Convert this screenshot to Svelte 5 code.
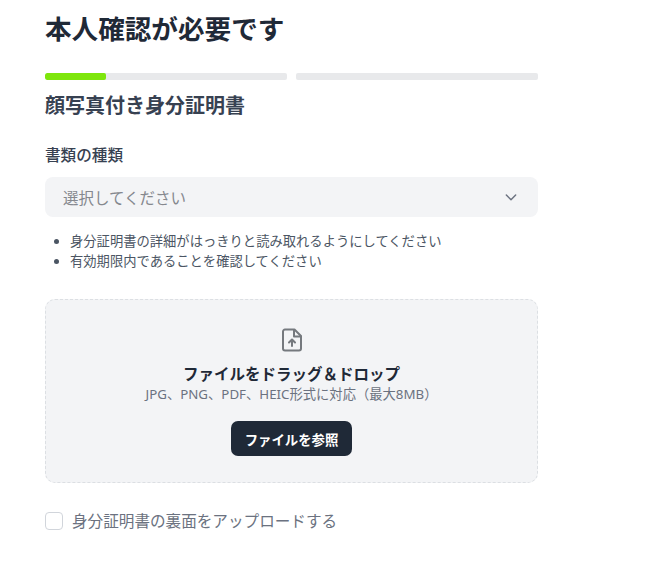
<script>
  const TIPS = [
    '身分証明書の詳細がはっきりと読み取れるようにしてください',
    '有効期限内であることを確認してください',
  ];
</script>

<main class="page">
  <h1 class="title">本人確認が必要です</h1>

  <div class="progress">
    <div class="track"><div class="fill"></div></div>
    <div class="track"></div>
  </div>

  <h2 class="subtitle">顔写真付き身分証明書</h2>

  <div class="label">書類の種類</div>
  <div class="select">
    <span>選択してください</span>
    <svg width="16" height="16" viewBox="0 0 24 24" fill="none" stroke="#6b7280" stroke-width="2.2" stroke-linecap="round" stroke-linejoin="round" aria-hidden="true">
      <path d="M5 9l7 7 7-7" />
    </svg>
  </div>

  <ul class="tips">
    {#each TIPS as tip}
      <li>{tip}</li>
    {/each}
  </ul>

  <section class="drop">
    <svg class="file-icon" width="24" height="24" viewBox="0 0 24 24" fill="none" stroke="#75797e" stroke-width="2" stroke-linecap="round" stroke-linejoin="round" aria-hidden="true">
      <path d="M5 1.5h9.5L21 8v12.5a2 2 0 0 1-2 2H5a2 2 0 0 1-2-2v-17a2 2 0 0 1 2-2z" />
      <path d="M14 2v6.5h6.5" />
      <path d="M12 18v-6M9 14.5l3-3 3 3" />
    </svg>
    <div class="drop-title">ファイルをドラッグ＆ドロップ</div>
    <div class="drop-sub">JPG、PNG、PDF、HEIC形式に対応（最大8MB）</div>
    <button class="browse" type="button">ファイルを参照</button>
  </section>

  <label class="back">
    <span class="box"></span>
    <span>身分証明書の裏面をアップロードする</span>
  </label>
</main>

<style>
  :global(body) {
    background: #fff;
    font-family: "Noto Sans", "Noto Sans CJK JP", sans-serif;
    color: #1f2937;
  }

  .page {
    width: 493px;
    padding: 11px 0 0 45px;
  }

  .title {
    margin: 0;
    font-size: 26.6px;
    line-height: 36px;
    font-weight: 700;
    color: #1f2937;
  }

  .progress {
    display: flex;
    gap: 9px;
    margin-top: 26px;
  }
  .track {
    flex: 1;
    height: 7px;
    border-radius: 2px;
    background: #e8e9eb;
    overflow: hidden;
  }
  .fill {
    width: 25%;
    height: 100%;
    border-radius: 2px;
    background: #7ee60c;
  }

  .subtitle {
    margin: 12px 0 0;
    font-size: 20px;
    line-height: 27px;
    font-weight: 700;
    color: #374151;
  }

  .label {
    margin-top: 26px;
    font-size: 15.6px;
    line-height: 21px;
    font-weight: 500;
    color: #374151;
  }

  .select {
    display: flex;
    align-items: center;
    justify-content: space-between;
    height: 40px;
    margin-top: 11px;
    padding: 0 19px 0 18px;
    border-radius: 8px;
    background: #f3f4f6;
    font-size: 15.5px;
    color: #85888e;
  }

  .tips {
    margin: 14px 0 0;
    padding: 0 0 0 25px;
    font-size: 13.3px;
    line-height: 20px;
    color: #4b5563;
  }

  .drop {
    display: flex;
    flex-direction: column;
    align-items: center;
    height: 184px;
    box-sizing: border-box;
    margin-top: 28px;
    padding-top: 28px;
    border: 1px dashed #dcdfe3;
    border-radius: 10px;
    background: #f3f4f6;
  }
  .file-icon {
    display: block;
  }
  .drop-title {
    margin-top: 12px;
    font-size: 15.5px;
    line-height: 21px;
    font-weight: 700;
    color: #1f2937;
  }
  .drop-sub {
    margin-top: -1px;
    font-size: 13.3px;
    line-height: 20px;
    color: #6b7280;
  }
  .browse {
    height: 35px;
    margin-top: 17px;
    padding: 0 14px;
    border: none;
    border-radius: 7px;
    background: #1f2937;
    color: #fff;
    font: inherit;
    font-size: 13.4px;
    font-weight: 700;
  }

  .back {
    display: flex;
    align-items: center;
    gap: 9px;
    margin-top: 28px;
    font-size: 15.6px;
    line-height: 20px;
    color: #6b7280;
  }
  .box {
    box-sizing: border-box;
    width: 18px;
    height: 18px;
    border: 1px solid #d1d5db;
    border-radius: 4px;
    background: #fff;
  }
</style>
